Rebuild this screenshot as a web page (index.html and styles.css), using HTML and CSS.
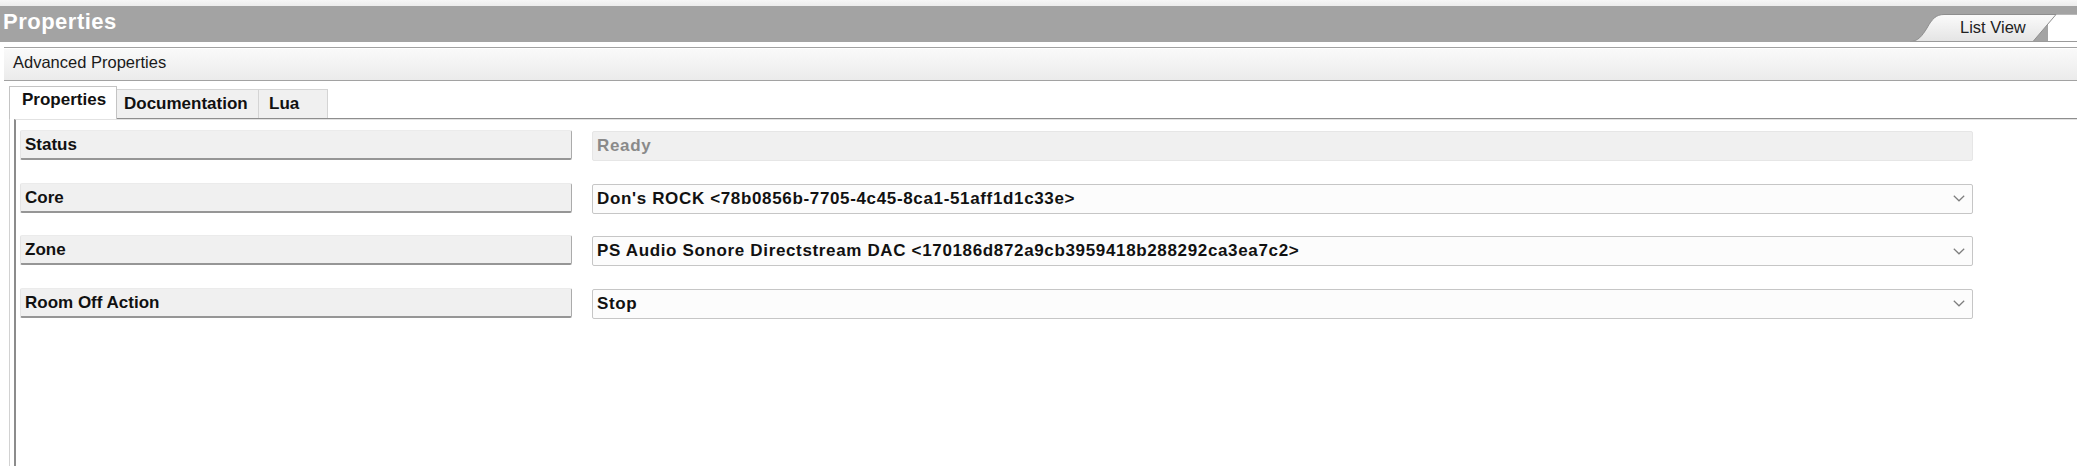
FILE: index.html
```html
<!DOCTYPE html>
<html>
<head>
<meta charset="utf-8">
<link rel="stylesheet" href="styles.css">
</head>
<body>
<div class="app">
  <div class="topstrip"></div>
  <div class="header">
    <div class="title">Properties</div>
    <div class="lv-tab">
      <svg class="lv-shape" width="167" height="36" viewBox="0 0 167 36">
        <defs>
          <linearGradient id="lvg" x1="0" y1="0" x2="0" y2="1">
            <stop offset="0" stop-color="#fbfbfb"/>
            <stop offset="1" stop-color="#e4e4e4"/>
          </linearGradient>
        </defs>
        <rect x="138" y="8" width="29" height="28" fill="#ffffff"/>
        <line x1="145" y1="8.5" x2="167" y2="8.5" stroke="#b8b8b8" stroke-width="1"/>
        <path d="M0,35.5 C8,35.5 12,30 17,22 C22,13 26,8.5 34,8.5 L146,8.5 L123,35.5 Z" fill="url(#lvg)" stroke="#8e8e8e" stroke-width="1"/>
        <line x1="0" y1="35.5" x2="167" y2="35.5" stroke="#9a9a9a" stroke-width="1"/>
      </svg>
      <span class="lv-text">List View</span>
    </div>
  </div>
  <div class="adv">Advanced Properties</div>
  <div class="tabs">
    <div class="tab tab-active tab-props">Properties</div>
    <div class="tab tab-docs">Documentation</div>
    <div class="tab tab-lua">Lua</div>
  </div>
  <div class="page-outer">
    <div class="page">
      <div class="rows">
        <div class="label">Status</div>
        <div class="value value-disabled">Ready</div>

        <div class="label">Core</div>
        <div class="value"><span>Don's ROCK &lt;78b0856b-7705-4c45-8ca1-51aff1d1c33e&gt;</span>
          <svg class="chev" width="12" height="7" viewBox="0 0 12 7"><path d="M0.8,0.8 L6,5.8 L11.2,0.8" fill="none" stroke="#7e7e7e" stroke-width="1.2"/></svg></div>

        <div class="label">Zone</div>
        <div class="value"><span>PS Audio Sonore Directstream DAC &lt;170186d872a9cb3959418b288292ca3ea7c2&gt;</span>
          <svg class="chev" width="12" height="7" viewBox="0 0 12 7"><path d="M0.8,0.8 L6,5.8 L11.2,0.8" fill="none" stroke="#7e7e7e" stroke-width="1.2"/></svg></div>

        <div class="label">Room Off Action</div>
        <div class="value"><span>Stop</span>
          <svg class="chev" width="12" height="7" viewBox="0 0 12 7"><path d="M0.8,0.8 L6,5.8 L11.2,0.8" fill="none" stroke="#7e7e7e" stroke-width="1.2"/></svg></div>
      </div>
    </div>
  </div>
</div>
</body>
</html>
```

FILE: styles.css
```css
html, body {
  margin: 0;
  padding: 0;
  background: #ffffff;
  overflow: hidden;
}

body {
  font-family: "Liberation Sans", Arial, sans-serif;
  color: #111111;
}

.app {
  width: 2077px;
  height: 466px;
  display: flex;
  flex-direction: column;
}

.topstrip {
  height: 6px;
  background: linear-gradient(#f6f6f6, #ececec);
}

.header {
  height: 36px;
  background: #a3a3a3;
  display: flex;
  justify-content: space-between;
}

.title {
  color: #ffffff;
  font-weight: bold;
  font-size: 22px;
  letter-spacing: 0.5px;
  line-height: 26px;
  padding: 3px 0 0 3px;
}

.lv-tab {
  position: relative;
  width: 167px;
  height: 36px;
}

.lv-shape {
  position: absolute;
  left: 0;
  top: 0;
}

.lv-text {
  position: relative;
  display: block;
  padding: 11px 0 0 50px;
  font-size: 16.5px;
  line-height: 20px;
  color: #222222;
}

.adv {
  margin: 5px 0 0 4px;
  height: 34px;
  box-sizing: border-box;
  border-top: 1px solid #a2a2a2;
  border-bottom: 1px solid #a2a2a2;
  box-shadow: inset 0 1px 0 #ffffff;
  background: linear-gradient(#fafafa, #ebebeb);
  padding-left: 9px;
  font-size: 16.5px;
  line-height: 29px;
  color: #1a1a1a;
}

.tabs {
  margin: 5px 0 0 9px;
  height: 32px;
  display: flex;
  align-items: flex-end;
}

.tab {
  box-sizing: border-box;
  font-weight: bold;
  font-size: 17px;
  line-height: 20px;
  color: #111111;
  background: #f0f0f0;
  border: 1px solid #d4d4d4;
  border-bottom: none;
  height: 29px;
  padding-top: 4px;
}

.tab-active {
  position: relative;
  z-index: 1;
  height: 33px;
  margin-bottom: -1px;
  background: #ffffff;
  border-color: #c4c4c4;
  padding-top: 3px;
}

.tab-props {
  width: 108px;
  padding-left: 12px;
}

.tab-docs {
  width: 142px;
  padding-left: 7px;
  border-left: none;
}

.tab-lua {
  width: 69px;
  padding-left: 10px;
  border-left: none;
}

.page-outer {
  flex: 1;
  margin-left: 9px;
  border-top: 1px solid #8e8e8e;
  border-left: 1px solid #d2d2d2;
  display: flex;
}

.page {
  flex: 1;
  margin-left: 4px;
  border-left: 2px solid #8c8c8c;
  border-top: 1px solid #e2e2e2;
  padding: 10px 0 0 4px;
}

.rows {
  display: grid;
  grid-template-columns: 552px 1381px;
  grid-auto-rows: 30px;
  column-gap: 20px;
  row-gap: 22.5px;
}

.label {
  box-sizing: border-box;
  height: 30px;
  background: #f0f0f0;
  border-top: 1px solid #ebebeb;
  border-left: 1px solid #e4e4e4;
  border-right: 1px solid #ababab;
  border-bottom: 2px solid #969696;
  border-radius: 2px;
  padding-left: 4px;
  font-weight: bold;
  font-size: 17px;
  line-height: 27px;
  color: #111111;
}

.value {
  box-sizing: border-box;
  height: 30px;
  margin-top: 1px;
  background: #fcfcfc;
  border: 1px solid #c6c6c6;
  border-radius: 2px;
  padding-left: 4px;
  display: flex;
  justify-content: space-between;
  align-items: center;
  font-weight: bold;
  font-size: 17px;
  letter-spacing: 0.65px;
  line-height: 28px;
  color: #111111;
}

.value-disabled {
  background: #f0f0f0;
  border-color: #e6e6e6;
  color: #8a8a8a;
}

.chev {
  margin-right: 7px;
  flex: none;
}
```
